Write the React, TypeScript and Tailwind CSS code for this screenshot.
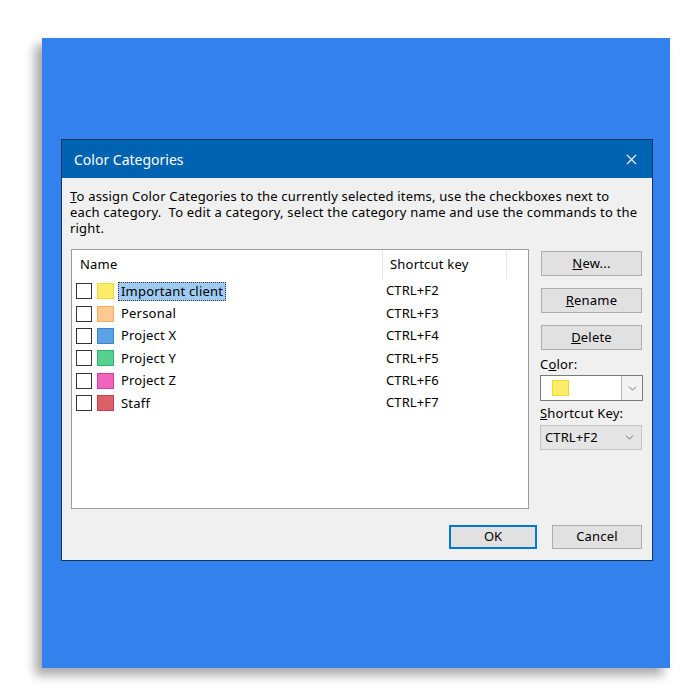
import { ChevronDown, X } from 'lucide-react';

const categories = [
  { name: 'Important client', key: 'CTRL+F2', fill: 'bg-[#fdeb6a]', edge: 'border-[#f2d92c]', selected: true },
  { name: 'Personal', key: 'CTRL+F3', fill: 'bg-[#fdc98f]', edge: 'border-[#f5ad63]' },
  { name: 'Project X', key: 'CTRL+F4', fill: 'bg-[#5aa2e2]', edge: 'border-[#3b86cf]' },
  { name: 'Project Y', key: 'CTRL+F5', fill: 'bg-[#56d08c]', edge: 'border-[#2fb56c]' },
  { name: 'Project Z', key: 'CTRL+F6', fill: 'bg-[#f064bd]', edge: 'border-[#dc3aa2]' },
  { name: 'Staff', key: 'CTRL+F7', fill: 'bg-[#dc6068]', edge: 'border-[#c8404a]' },
];

function SideButton({ access, rest }: { access: string; rest: string }) {
  return (
    <button className="h-[25px] w-[101px] border border-[#adadad] bg-[#e1e1e1] text-[13px] tracking-[0.2px] text-black">
      <span className="underline">{access}</span>
      {rest}
    </button>
  );
}

export default function App() {
  return (
    <div
      className="w-[700px] h-[700px] bg-white pl-[42px] pt-[38px]"
      style={{ fontFamily: '"Noto Sans", "Open Sans", sans-serif' }}
    >
      <div className="w-[628px] h-[630px] bg-[#3381ed] pl-[19px] pt-[101px] shadow-[-7px_7px_10px_rgba(0,0,0,0.35)]">
        {/* Dialog */}
        <div className="w-[592px] h-[422px] border border-[#10355a] bg-[#f0f0f0] flex flex-col">
          {/* Title bar */}
          <div className="h-[38px] bg-[#0063b1] flex items-center justify-between pl-[12px] pr-[12px]">
            <span className="text-white text-[14px]">Color Categories</span>
            <X className="w-[17px] h-[17px] text-white" strokeWidth={1.6} />
          </div>

          <div className="flex-1 flex flex-col pl-[8px] pr-[9px] pt-[10px]">
            <p className="text-[13px] leading-[16px] text-black tracking-[0.2px] whitespace-nowrap">
              <span className="underline">T</span>o assign Color Categories to the currently selected items, use the checkboxes next to
              <br />
              each category.&nbsp; To edit a category, select the category name and use the commands to the
              <br />
              right.
            </p>

            <div className="flex mt-[13px] pl-[1px]">
              {/* List */}
              <div className="w-[460px] h-[260px] border border-[#9c9c9c] bg-white">
                <div className="flex h-[30px] items-center">
                  <div className="w-[310px] pl-[8px] text-[13px] tracking-[0.2px] text-black">Name</div>
                  <div className="h-[28px] w-px bg-[#e6e6e6]" />
                  <div className="w-[123px] pl-[7px] text-[13px] tracking-[0.2px] text-black">Shortcut key</div>
                  <div className="h-[28px] w-px bg-[#e6e6e6]" />
                </div>
                <div className="flex flex-col">
                  {categories.map((c) => (
                    <div key={c.name} className="flex items-center h-[22.4px]">
                      <div className="w-[16px] h-[16px] border border-[#333] bg-white ml-[4px]" />
                      <div className={`w-[17px] h-[16px] border ${c.edge} ${c.fill} ml-[5px]`} />
                      <div className="w-[268px] pl-[6px] flex">
                        {c.selected ? (
                          <span className="text-[13px] tracking-[0.2px] leading-[17px] px-[2px] -ml-[2px] bg-[#9fcbf2] border border-dotted border-[#333] text-black">
                            {c.name}
                          </span>
                        ) : (
                          <span className="text-[13px] tracking-[0.2px] leading-[17px] text-black border border-transparent">{c.name}</span>
                        )}
                      </div>
                      <div className="pl-[4px] text-[13px] tracking-[0.1px] text-black">{c.key}</div>
                    </div>
                  ))}
                </div>
              </div>

              {/* Commands */}
              <div className="ml-[11px] flex flex-col pt-[2px]">
                <div className="pl-[1px] flex flex-col gap-[12px]">
                  <SideButton access="N" rest="ew..." />
                  <SideButton access="R" rest="ename" />
                  <SideButton access="D" rest="elete" />
                </div>
                <div className="mt-[6px] text-[13px] tracking-[0.2px] leading-[16px] text-black">
                  C<span className="underline">o</span>lor:
                </div>
                <div className="mt-[3px] w-[103px] h-[26px] border border-[#7a7a7a] bg-white flex">
                  <div className="flex-1 flex items-center pl-[11px]">
                    <div className="w-[17px] h-[16px] bg-[#fdeb6a] border border-[#f2d92c]" />
                  </div>
                  <div className="w-[21px] border-l border-[#b8b8b8] bg-[#f3f3f3] flex items-center justify-center">
                    <ChevronDown className="w-[13px] h-[13px] text-[#555]" strokeWidth={1.5} />
                  </div>
                </div>
                <div className="mt-[4px] text-[13px] tracking-[0.2px] leading-[16px] text-black">
                  <span className="underline">S</span>hortcut Key:
                </div>
                <div className="mt-[4px] w-[102px] h-[25px] border border-[#c3c3c3] bg-[#e5e5e5] flex items-center justify-between pl-[4px] pr-[5px]">
                  <span className="text-[13px] tracking-[0.1px] text-black">CTRL+F2</span>
                  <ChevronDown className="w-[13px] h-[13px] text-[#555]" strokeWidth={1.5} />
                </div>
              </div>
            </div>

            {/* Footer */}
            <div className="flex justify-end gap-[15px] mt-[16px] pr-[1px]">
              <button className="w-[88px] h-[24px] border-2 border-[#0078d7] bg-[#e1e1e1] text-[13px] text-black">OK</button>
              <button className="w-[90px] h-[24px] border border-[#adadad] bg-[#e1e1e1] text-[13px] tracking-[0.2px] text-black">Cancel</button>
            </div>
          </div>
        </div>
      </div>
    </div>
  );
}
